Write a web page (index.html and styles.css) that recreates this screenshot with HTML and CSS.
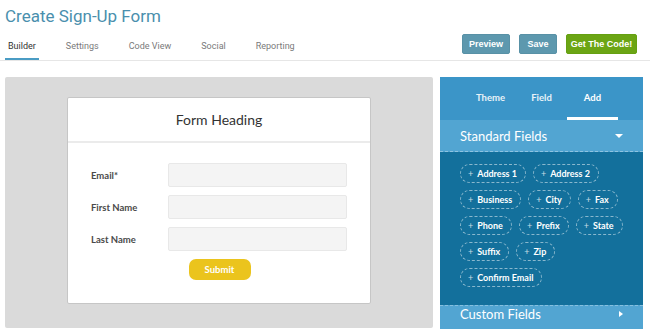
FILE: index.html
```html
<!DOCTYPE html>
<html lang="en">
<head>
    <meta charset="UTF-8">
    <title>Create Sign-Up Form</title>
    <link rel="stylesheet" href="styles.css">
</head>
<body>
    <div id="header">
        <h1 class="page-title">Create Sign-Up Form</h1>
        <div class="nav-row">
            <ul class="tabs">
                <li class="tab active">Builder</li>
                <li class="tab">Settings</li>
                <li class="tab">Code View</li>
                <li class="tab">Social</li>
                <li class="tab">Reporting</li>
            </ul>
            <div class="actions">
                <span class="btn btn-preview">Preview</span>
                <span class="btn btn-save">Save</span>
                <span class="btn btn-code">Get The Code!</span>
            </div>
        </div>
    </div>
    <div id="main">
        <div class="canvas">
            <div class="form-card">
                <div class="form-head">Form Heading</div>
                <div class="form-body">
                    <div class="form-row">
                        <label>Email*</label>
                        <span class="input"></span>
                    </div>
                    <div class="form-row">
                        <label>First Name</label>
                        <span class="input"></span>
                    </div>
                    <div class="form-row">
                        <label>Last Name</label>
                        <span class="input"></span>
                    </div>
                    <div class="submit-wrap">
                        <span class="submit">Submit</span>
                    </div>
                </div>
            </div>
        </div>
        <div class="panel">
            <ul class="panel-tabs">
                <li>Theme</li>
                <li>Field</li>
                <li class="active">Add</li>
            </ul>
            <div class="section-head">
                <span>Standard Fields</span>
                <span class="arrow-down"></span>
            </div>
            <div class="chips">
                <span class="chip"><i>+</i>Address 1</span>
                <span class="chip"><i>+</i>Address 2</span>
                <span class="chip"><i>+</i>Business</span>
                <span class="chip"><i>+</i>City</span>
                <span class="chip"><i>+</i>Fax</span>
                <span class="chip"><i>+</i>Phone</span>
                <span class="chip"><i>+</i>Prefix</span>
                <span class="chip"><i>+</i>State</span>
                <span class="chip"><i>+</i>Suffix</span>
                <span class="chip"><i>+</i>Zip</span>
                <span class="chip"><i>+</i>Confirm Email</span>
            </div>
            <div class="section-head section-custom">
                <span>Custom Fields</span>
                <span class="arrow-right"></span>
            </div>
        </div>
    </div>
</body>
</html>
```

FILE: styles.css
```css
*{
    margin: 0;
    padding: 0;
    box-sizing: border-box;
}
ul,li{
    list-style: none;
}
body{
    background: #ffffff;
    font-family: Roboto, "Liberation Sans", sans-serif;
    width: 650px;
    height: 335px;
    overflow: hidden;
}
#header{
    padding: 4px 0 0 0;
}
.page-title{
    font-size: 17px;
    font-weight: 400;
    line-height: 24px;
    color: #4a8fad;
    padding-left: 5px;
}
.nav-row{
    height: 33px;
    display: flex;
    justify-content: space-between;
    align-items: flex-end;
    border-bottom: 1px solid #e6e6e6;
}
.tabs{
    display: flex;
    gap: 24px;
    padding-left: 5px;
}
.tab{
    font-size: 9px;
    line-height: 12px;
    color: #7a7a7a;
    padding: 0 3px 6px;
    border-bottom: 2px solid transparent;
}
.tab.active{
    color: #333333;
    border-bottom-color: #4a9cc4;
}
.actions{
    display: flex;
    gap: 9px;
    padding: 0 13px 6px 0;
}
.btn{
    height: 20px;
    line-height: 18px;
    text-align: center;
    font-family: "Liberation Sans", Arial, sans-serif;
    font-size: 9px;
    font-weight: bold;
    color: #ffffff;
    border-radius: 2px;
    background: #5d98ae;
    border: 1px solid #5891a6;
}
.btn-preview{
    width: 48px;
}
.btn-save{
    width: 38px;
}
.btn-code{
    width: 71px;
    background: #6ba514;
    border-color: #65a012;
}
#main{
    display: flex;
    gap: 7px;
    margin-top: 16px;
    padding-left: 5px;
}
.canvas{
    width: 428px;
    height: 251px;
    background: #dadada;
    border-radius: 2px;
    padding: 20px 0 0 62px;
}
.form-card{
    width: 304px;
    height: 207px;
    background: #ffffff;
    border: 1px solid #c6c6c6;
    border-radius: 2px;
    font-family: Lato, "Open Sans", sans-serif;
}
.form-head{
    height: 45px;
    line-height: 44px;
    text-align: center;
    font-size: 14px;
    color: #333333;
    border-bottom: 2px solid #ebebeb;
}
.form-body{
    padding: 20px 0 0 23px;
}
.form-row{
    display: flex;
    align-items: center;
    margin-bottom: 8px;
}
.form-row label{
    width: 77px;
    font-size: 9.5px;
    font-weight: bold;
    color: #4a4a4a;
}
.input{
    width: 179px;
    height: 24px;
    background: #f4f4f4;
    border: 1px solid #e8e8e8;
    border-radius: 2px;
}
.submit-wrap{
    display: flex;
    justify-content: center;
    padding-right: 22px;
    margin-top: 1px;
}
.submit{
    width: 62px;
    height: 21px;
    line-height: 21px;
    text-align: center;
    background: #ebc41d;
    color: #ffffff;
    font-size: 9.5px;
    font-weight: bold;
    border-radius: 7px;
}
.panel{
    width: 203px;
    height: 252px;
    overflow: hidden;
    font-family: Lato, "Open Sans", sans-serif;
    color: #ffffff;
}
.panel-tabs{
    height: 43px;
    background: #3b95c8;
    display: flex;
    align-items: flex-end;
    padding-left: 25px;
}
.panel-tabs li{
    width: 51px;
    text-align: center;
    font-size: 9.5px;
    font-weight: bold;
    line-height: 12px;
    padding-bottom: 13px;
    border-bottom: 3px solid transparent;
    color: #e8f2f8;
}
.panel-tabs li.active{
    border-bottom-color: #ffffff;
    color: #ffffff;
}
.section-head{
    height: 32px;
    background: #52a5d2;
    display: flex;
    justify-content: space-between;
    align-items: center;
    padding: 0 20px 0 20px;
    font-size: 13px;
    border-bottom: 1px dashed rgba(255,255,255,0.35);
}
.section-custom{
    align-items: flex-start;
    padding-top: 1px;
    line-height: 15px;
    border-bottom: none;
    border-top: 1px dashed rgba(255,255,255,0.3);
}
.section-custom .arrow-right{
    margin-top: 4px;
}
.arrow-down{
    width: 0;
    height: 0;
    border-left: 4px solid transparent;
    border-right: 4px solid transparent;
    border-top: 4px solid #ffffff;
}
.arrow-right{
    width: 0;
    height: 0;
    border-top: 3px solid transparent;
    border-bottom: 3px solid transparent;
    border-left: 4px solid #ffffff;
}
.chips{
    background: #13709c;
    display: flex;
    flex-wrap: wrap;
    align-content: flex-start;
    gap: 7px;
    padding: 12px 18px 0 20px;
    height: 153px;
}
.chip{
    height: 19px;
    line-height: 17px;
    padding: 0 8px 0 7px;
    font-size: 9px;
    font-weight: bold;
    border: 1px dashed rgba(255,255,255,0.5);
    border-radius: 10px;
}
.chip i{
    font-style: normal;
    font-weight: normal;
    opacity: 0.75;
    margin-right: 4px;
}
```
